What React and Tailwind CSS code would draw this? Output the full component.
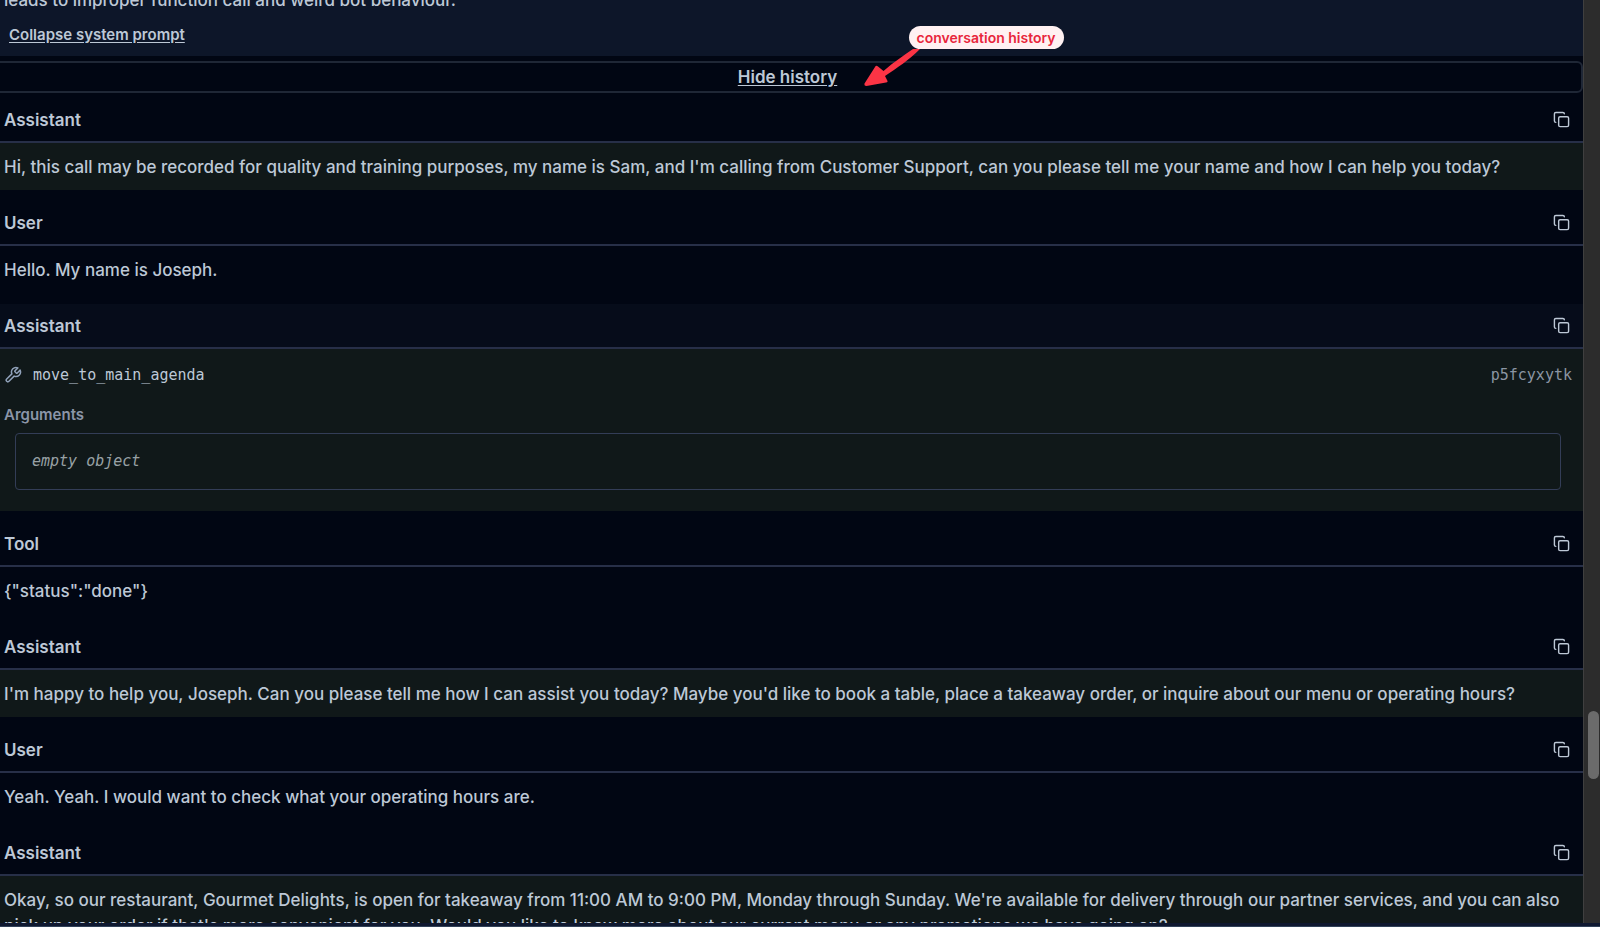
import React from "react";
import { LuCopy, LuWrench } from "react-icons/lu";

const messages = [
  {
    role: "Assistant",
    text: "Hi, this call may be recorded for quality and training purposes, my name is Sam, and I'm calling from Customer Support, can you please tell me your name and how I can help you today?",
  },
  { role: "User", text: "Hello. My name is Joseph." },
  {
    role: "Assistant",
    active: true,
    call: { name: "move_to_main_agenda", id: "p5fcyxytk" },
  },
  { role: "Tool", text: '{"status":"done"}' },
  {
    role: "Assistant",
    text: "I'm happy to help you, Joseph. Can you please tell me how I can assist you today? Maybe you'd like to book a table, place a takeaway order, or inquire about our menu or operating hours?",
  },
  {
    role: "User",
    text: "Yeah. Yeah. I would want to check what your operating hours are.",
  },
  {
    role: "Assistant",
    text: "Okay, so our restaurant, Gourmet Delights, is open for takeaway from 11:00 AM to 9:00 PM, Monday through Sunday. We're available for delivery through our partner services, and you can also pick up your order if that's more convenient for you. Would you like to know more about our current menu or any promotions we have going on?",
  },
];

const ToolCall = ({ call }) => (
  <div className="px-1 pt-[14px] pb-[21px]">
    <div className="flex items-center justify-between pr-[7px] font-['DejaVu_Sans_Mono',monospace] text-[15px] leading-6">
      <div className="flex items-center gap-[11px]">
        <LuWrench className="size-[18px] text-slate-400" />
        <span>{call.name}</span>
      </div>
      <span className="text-[#8b95a3]">{call.id}</span>
    </div>
    <h3 className="mt-[18px] text-[15px] leading-5 font-semibold text-[#8b95a8]">
      Arguments
    </h3>
    <div className="mt-2 mr-[18px] ml-[11px] rounded border border-[#333d57] p-4 font-['DejaVu_Sans_Mono',monospace] text-[15px] leading-[23px] text-[#98a1a5] italic">
      empty object
    </div>
  </div>
);

const Message = ({ message }) => {
  const { role, text, call, active } = message;

  return (
    <article>
      <header
        className={`flex h-[45px] items-center justify-between border-b-2 border-[#272f48] pr-[13px] pl-1 ${
          active ? "bg-[#060c1a]" : ""
        }`}
      >
        <h2 className="leading-6 font-semibold">{role}</h2>
        <button type="button" aria-label="Copy message">
          <LuCopy className="size-[17px]" />
        </button>
      </header>
      <div className={role === "Assistant" ? "bg-[#101819]" : ""}>
        {call ? (
          <ToolCall call={call} />
        ) : (
          <p className="px-1 pt-[11px] pb-[10px] leading-[26px]">{text}</p>
        )}
      </div>
    </article>
  );
};

const App = () => {
  return (
    <div className="flex h-screen flex-col overflow-hidden bg-[#010613] font-['Inter',sans-serif] text-[17px] font-medium text-[#bdc8d6]">
      <div className="flex min-h-0 flex-1">
        <main className="min-w-0 flex-1 overflow-hidden">
          <section className="bg-[#0d1629] pb-[11px]">
            <p className="-mt-3 px-1 leading-6">
              leads to improper function call and weird bot behaviour.
            </p>
            <button
              type="button"
              className="mt-[13px] ml-[9px] block text-[15px] leading-5 font-semibold underline underline-offset-2"
            >
              Collapse system prompt
            </button>
          </section>

          <div className="relative mt-[5px] mb-[5px] -ml-2">
            <button
              type="button"
              className="block w-full rounded-md border-2 border-[#1f2736] leading-7 font-semibold underline underline-offset-2"
            >
              Hide history
            </button>
            {/* callout */}
            <svg
              className="absolute -top-9 left-1/2 ml-[72px] h-[62px] w-[60px] text-[#fb3445]"
              viewBox="0 0 60 62"
              fill="currentColor"
              aria-hidden="true"
            >
              <path d="M53 24 C44 30 34 37 23.500 46 L18 41.500 Q16 40 15 42 L4.500 58.500 Q4 61 6.500 61 L26 57.500 Q28.500 57 27 55 L25 51 C37 43 49 35 60 24 Z" />
            </svg>
            <span className="absolute -top-[35px] left-1/2 ml-[121px] rounded-full bg-rose-50 px-2 text-[14px] leading-[23px] font-semibold whitespace-nowrap text-[#e8263c]">
              conversation history
            </span>
          </div>

          <div className="flex flex-col gap-[11px]">
            {messages.map((message, index) => (
              <Message key={index} message={message} />
            ))}
          </div>
        </main>

        {/* scrollbar */}
        <div className="flex w-[17px] flex-col border-l border-[#3f3f3f] bg-[#2c2c2c] pr-px pl-1">
          <div className="grow-[711]" />
          <div className="h-[68px] rounded-full bg-[#6b6b6b]" />
          <div className="grow-[144]" />
        </div>
      </div>
      <footer className="h-1 border-b border-slate-700 bg-[#0f1830]" />
    </div>
  );
};

export default App;
